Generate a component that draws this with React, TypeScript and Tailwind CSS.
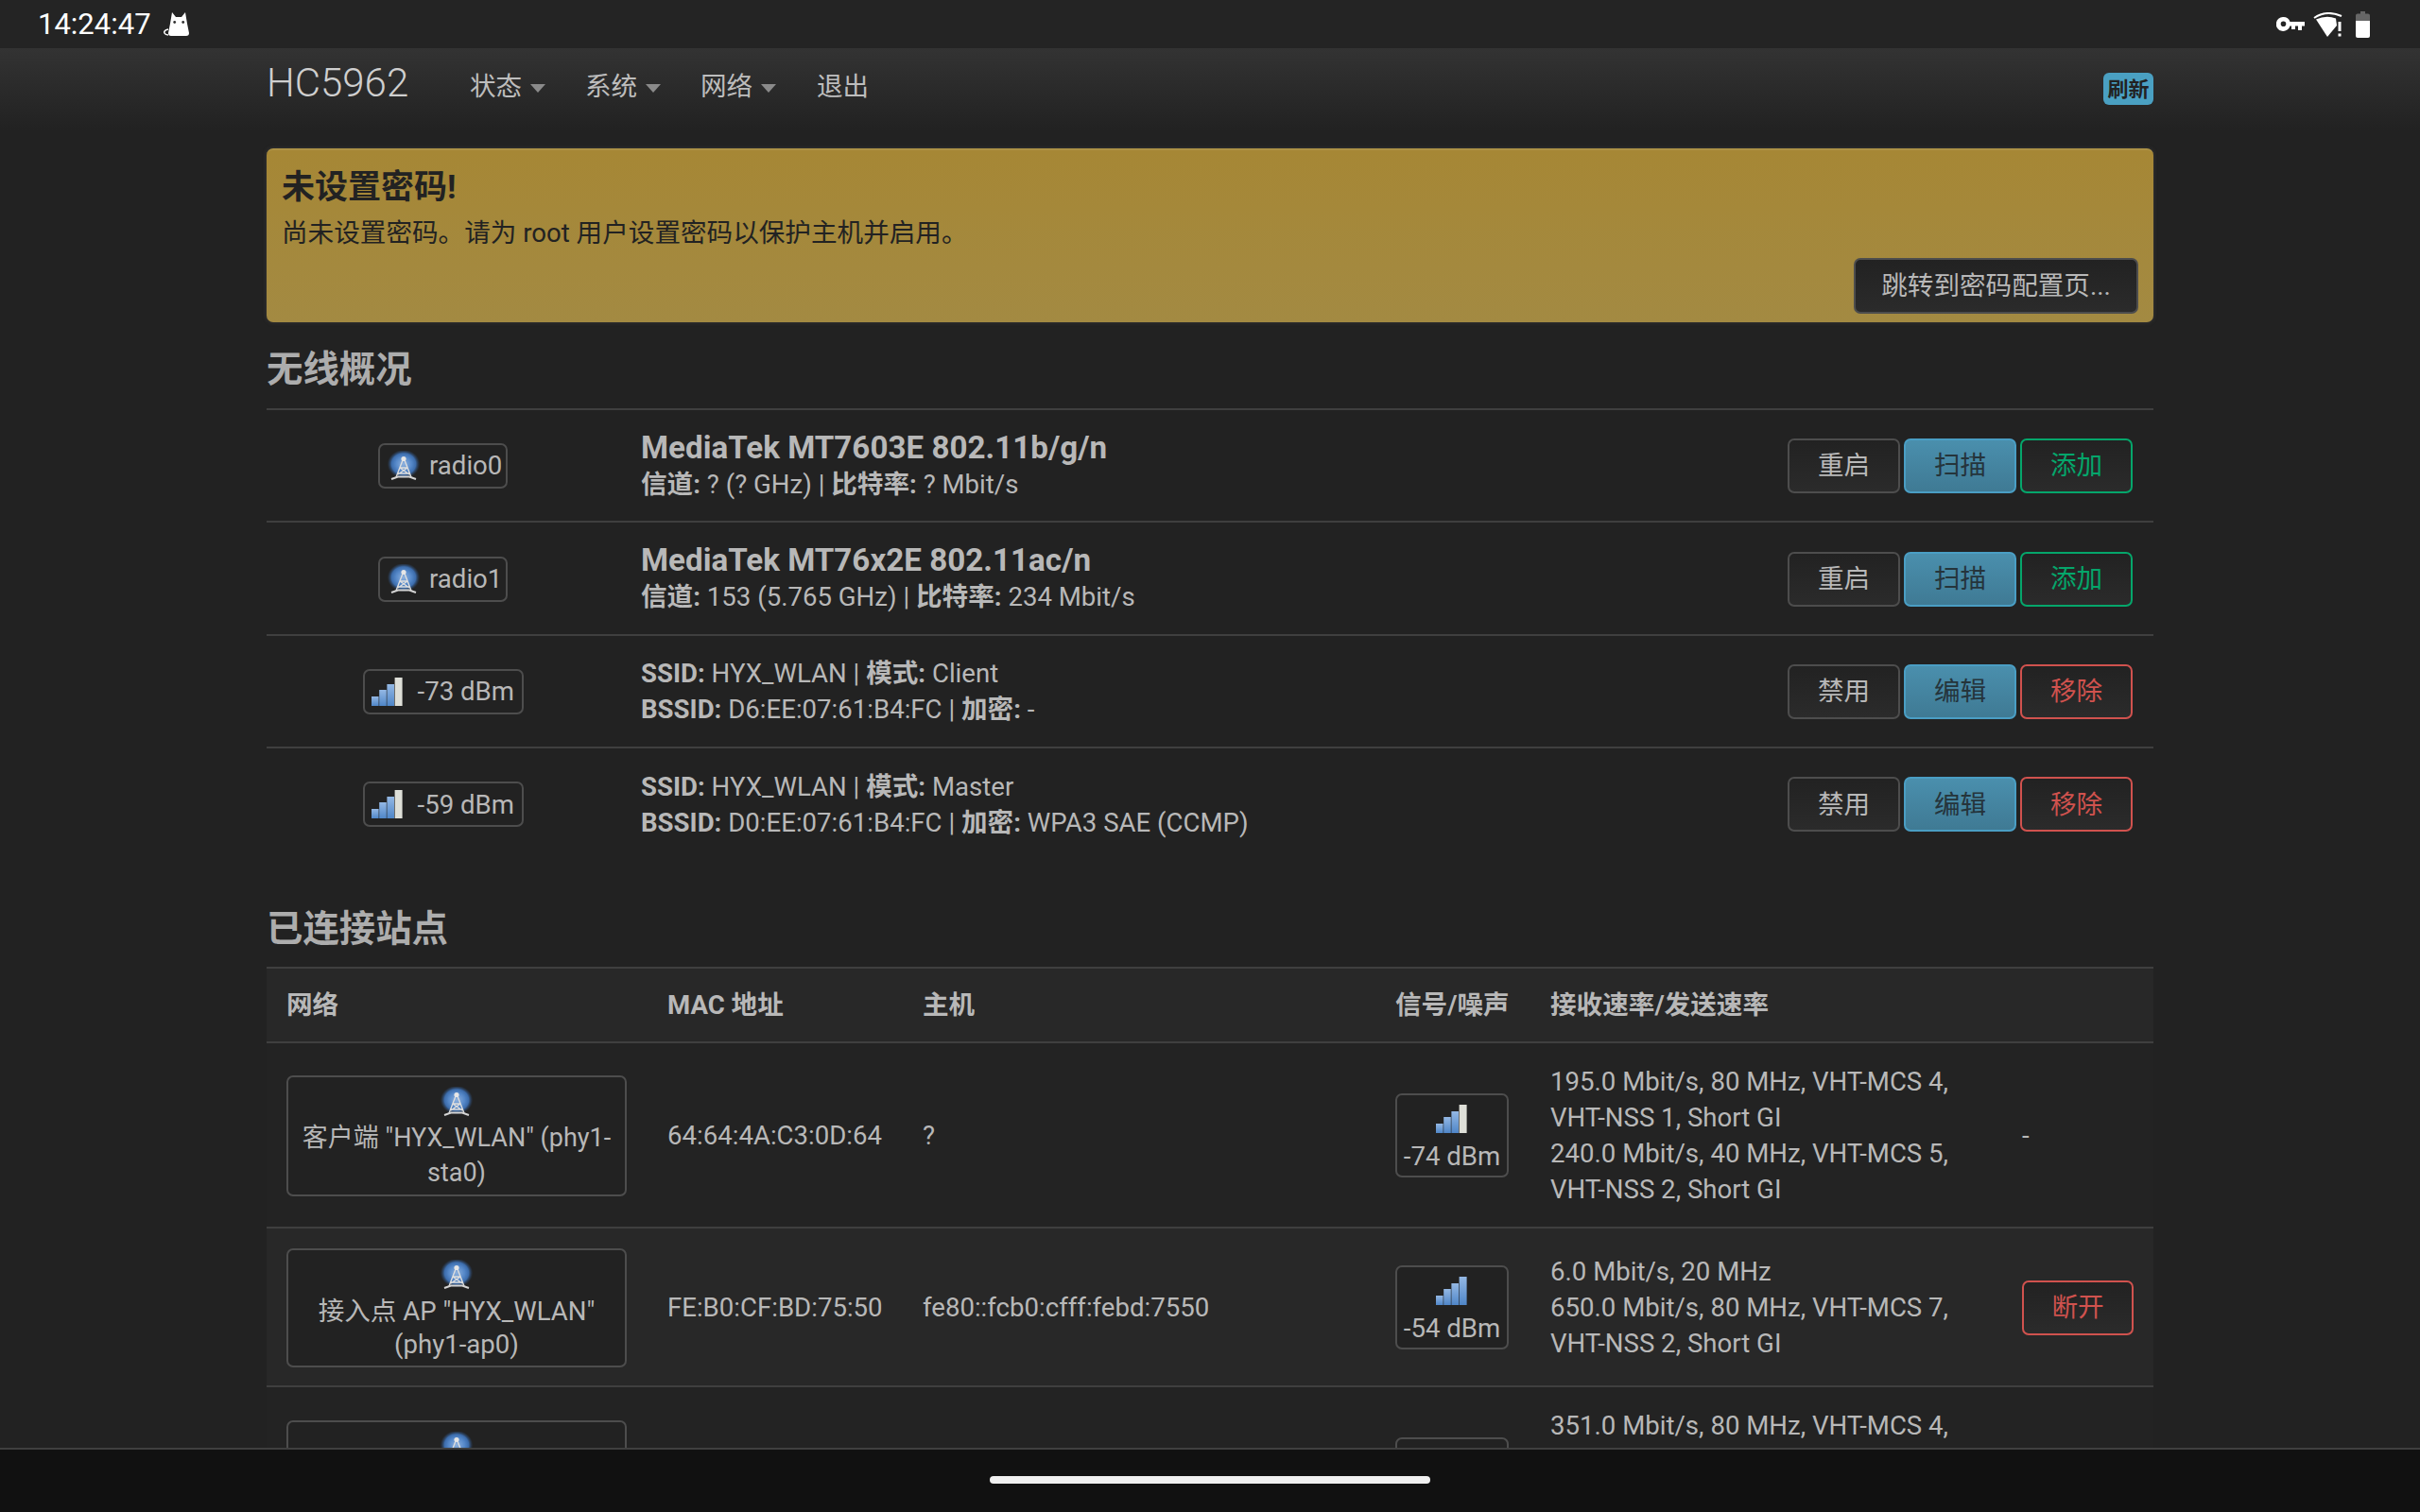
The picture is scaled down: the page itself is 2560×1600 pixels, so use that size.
import React from "react";

const font = { fontFamily: 'Roboto, "Noto Sans CJK SC", sans-serif' };

function Tower({ id }: { id: string }) {
  return (
    <svg width="34" height="32" viewBox="0 0 34 32" className="shrink-0">
      <defs>
        <radialGradient id={id} cx="50%" cy="50%" r="50%">
          <stop offset="0%" stopColor="#8fb2de" />
          <stop offset="50%" stopColor="#5487c8" />
          <stop offset="75%" stopColor="#3c6cab" />
          <stop offset="100%" stopColor="#2a4468" stopOpacity="0.1" />
        </radialGradient>
      </defs>
      <ellipse cx="17" cy="14" rx="17" ry="15" fill={`url(#${id})`} />
      <path d="M16 10 L9 28 M18 10 L25 28 M13 18 L21 18 M11 24 L23 24 M13 18 L23 25 M21 18 L11 25" stroke="#dedede" strokeWidth="1.4" fill="none" />
      <path d="M4 30 L11 27.5 L23 27.5 L30 30" stroke="#d4d4d4" strokeWidth="2" fill="none" />
      <circle cx="17" cy="8.5" r="2.6" fill="#e6e6e6" />
    </svg>
  );
}

function Signal({ full, id }: { full?: boolean; id: string }) {
  return (
    <svg width="34" height="32" viewBox="0 0 34 32" className="shrink-0">
      <defs>
        <linearGradient id={id} x1="0" y1="0" x2="0" y2="1">
          <stop offset="0%" stopColor="#94b8e4" />
          <stop offset="100%" stopColor="#4f86c8" />
        </linearGradient>
      </defs>
      <rect x="0" y="21" width="7.6" height="10" fill={`url(#${id})`} />
      <rect x="8.2" y="14" width="7.6" height="17" fill={`url(#${id})`} />
      <rect x="16.4" y="8" width="7.6" height="23" fill={`url(#${id})`} />
      <rect x="24.6" y="1" width="8" height="30" fill={full ? `url(#${id})` : "#dedfd8"} />
    </svg>
  );
}

function Btn({ kind, children }: { kind: "default" | "info" | "green" | "red"; children: React.ReactNode }) {
  const styles = {
    default: "border-[#4d4d4d] text-[#b8b8b8] bg-gradient-to-b from-[#222222] to-[#2b2b2b]",
    info: "border-[#4a9ec4] text-[#25343b] bg-gradient-to-b from-[#4a8fad] to-[#3f7a94]",
    green: "border-[#05a66b] text-[#05a66b] bg-gradient-to-b from-[#222222] to-[#2b2b2b]",
    red: "border-[#d0524e] text-[#d0524e] bg-gradient-to-b from-[#222222] to-[#2b2b2b]",
  }[kind];
  return (
    <div className={`w-[119px] h-[58px] rounded-[7px] border-2 flex items-center justify-center text-[27.6px] ${styles}`}>
      {children}
    </div>
  );
}

function Row({ badge, lines, buttons }: { badge: React.ReactNode; lines: React.ReactNode; buttons: React.ReactNode }) {
  return (
    <div className="h-[119.4px] border-t-2 border-[#3f3f3f] pt-[1px] flex items-center box-border">
      <div className="w-[373px] flex justify-center shrink-0">{badge}</div>
      <div className="ml-[23px] flex-1 text-[27.6px] leading-[38px] pt-[1px]">{lines}</div>
      <div className="flex gap-[4px] pr-[22px]">{buttons}</div>
    </div>
  );
}

function Badge({ icon, text, wide }: { icon: React.ReactNode; text: string; wide?: boolean }) {
  return (
    <div className={`h-[48px] rounded-[7px] border-2 border-[#4d4d4d] bg-[#222222] flex items-center text-[27.6px] text-[#b8b8b8] ${wide ? "w-[170px] pl-[7px] gap-[15px]" : "w-[137px] pl-[8px] gap-[10px]"}`}>
      {icon}
      <span>{text}</span>
    </div>
  );
}

function Radio({ title, sub }: { title: string; sub: React.ReactNode }) {
  return (
    <div className="-mt-[2px]">
      <div className="text-[33.2px] font-bold leading-[40px] text-[#b8b8b8]">{title}</div>
      <div className="leading-[38px]">{sub}</div>
    </div>
  );
}

function NetBox({ id, l1, l2, tight }: { id: string; l1: string; l2: string; tight?: boolean }) {
  return (
    <div className={`w-[360px] rounded-[7px] border-2 border-[#4d4d4d] bg-[#222222] flex flex-col items-center text-center leading-[37px] text-[#b8b8b8] pt-[10px] pb-[4px] ${tight ? "text-[27.6px]" : "text-[27px]"}`}>
      <Tower id={id} />
      <div className="px-[6px] mt-[4px] whitespace-nowrap">{l1}</div>
      <div className={tight ? "-mt-[2px]" : ""}>{l2}</div>
    </div>
  );
}

function SigBox({ id, full, text }: { id: string; full?: boolean; text: string }) {
  return (
    <div className="w-[120px] h-[89px] rounded-[7px] border-2 border-[#4d4d4d] bg-[#222222] flex flex-col items-center pt-[9px] text-[27.6px] leading-[36px] text-[#b8b8b8]">
      <Signal id={id} full={full} />
      <span className="mt-[6px]">{text}</span>
    </div>
  );
}

const cell = "px-[21px] pt-[22px] pb-[20px] align-middle";
const cellTight = "px-[21px] pt-[21px] pb-[19px] align-middle";

export default function App() {
  return (
    <div style={font} className="w-[2560px] h-[1600px] overflow-hidden bg-[#222222] flex flex-col text-[#b8b8b8]">
      {/* Status bar */}
      <div className="h-[51px] shrink-0 bg-[#242424] flex items-center pl-[40px] pr-[53px] text-white">
        <span className="text-[31px] leading-none">14:24:47</span>
        <svg width="28" height="26" viewBox="0 0 28 26" className="ml-[13px]">
          <path d="M9 0 L13 5 H19 L23 0 L25 12 L27 22 Q27 25 24 25 H8 Q5 25 5 22 L7 12 Z" fill="#fff" />
          <path d="M5 18 Q0 19 1 22 Q2 24 5 24" stroke="#fff" strokeWidth="1.6" fill="none" />
          <circle cx="11.7" cy="10.5" r="1.4" fill="#333" />
          <circle cx="20.7" cy="10.5" r="1.4" fill="#333" />
        </svg>
        <div className="flex-1" />
        <svg width="30" height="15" viewBox="0 0 30 15">
          <path fillRule="evenodd" d="M7.5 0 A7.5 7.5 0 0 1 14.5 5 H30 V9.5 H27 V14 H23 V9.5 H20 V13 H16 V9.5 H14.5 A7.5 7.5 0 1 1 7.5 0 Z M7.5 4.5 A2.8 2.8 0 1 0 7.5 10.1 A2.8 2.8 0 1 0 7.5 4.5 Z" fill="#fff" />
        </svg>
        <svg width="31" height="26" viewBox="0 0 31 26" className="ml-[9px]">
          <path d="M1 6 Q14 -3 30 4" stroke="#fff" strokeWidth="2" fill="none" />
          <path d="M3 7.5 Q14 2.5 24 6.5 L25 14 L15 26 Z" fill="#fff" />
          <rect x="26.5" y="10" width="3" height="10" fill="#fff" />
          <rect x="26.5" y="22.5" width="3" height="3" fill="#fff" />
        </svg>
        <svg width="15" height="28" viewBox="0 0 15 28" className="ml-[14px]">
          <path d="M5 0 H10 V2.5 H13 Q15 2.5 15 4.5 V10 H0 V4.5 Q0 2.5 2 2.5 H5 Z" fill="#666" />
          <path d="M0 10 H15 V26 Q15 28 13 28 H2 Q0 28 0 26 Z" fill="#fff" />
        </svg>
      </div>

      {/* Page */}
      <div className="flex-1 min-h-0 overflow-hidden">
        {/* Navbar */}
        <div className="h-[86px] bg-gradient-to-b from-[#333333] to-[#222222]">
          <div className="w-[1996px] mx-auto h-full flex items-start">
            <span className="text-[42px] font-light text-[#cfcfcf] leading-[48px] mt-[13px] w-[215px]">HC5962</span>
            <div className="flex items-center text-[27.6px] text-[#bdbdbd] mt-[22px] leading-[38px]">
              <span className="w-[122px] flex items-center">状态<span className="ml-[9px] mt-[3px] w-0 h-0 border-x-[8px] border-x-transparent border-t-[9px] border-t-[#8a8a8a]" /></span>
              <span className="w-[122px] flex items-center">系统<span className="ml-[9px] mt-[3px] w-0 h-0 border-x-[8px] border-x-transparent border-t-[9px] border-t-[#8a8a8a]" /></span>
              <span className="w-[123px] flex items-center">网络<span className="ml-[9px] mt-[3px] w-0 h-0 border-x-[8px] border-x-transparent border-t-[9px] border-t-[#8a8a8a]" /></span>
              <span>退出</span>
            </div>
            <div className="flex-1" />
            <span className="mt-[26px] w-[53px] h-[34px] rounded-[6px] bg-[#4aa0c2] text-[#222222] text-[22px] font-bold flex items-center justify-center">刷新</span>
          </div>
        </div>

        <div className="w-[1996px] mx-auto">
          {/* Alert */}
          <div className="mt-[20px] h-[184px] rounded-[7px] border-t-2 border-[#ad9246] bg-gradient-to-b from-[#a68735] to-[#a38a42] px-[16px] flex flex-col text-[#222222] shadow-[0_0_4px_#3a3a3a]">
            <div className="text-[35px] font-bold leading-[44px] mt-[18px]">未设置密码!</div>
            <div className="text-[27.6px] leading-[38px] mt-[7px]">尚未设置密码。请为 root 用户设置密码以保护主机并启用。</div>
            <div className="flex justify-end mt-auto mb-[9px]">
              <div className="w-[301px] h-[59px] rounded-[7px] border-2 border-[#4d4d4d] bg-gradient-to-b from-[#222222] to-[#2b2b2b] text-[#b8b8b8] text-[27.6px] flex items-center justify-center">跳转到密码配置页...</div>
            </div>
          </div>

          <div className="mt-[22px] mb-[13px] text-[38.4px] font-bold leading-[56px] text-[#adadad]">无线概况</div>

          <Row
            badge={<Badge icon={<Tower id="t1" />} text="radio0" />}
            lines={<Radio title="MediaTek MT7603E 802.11b/g/n" sub={<><b>信道:</b> ? (? GHz) | <b>比特率:</b> ? Mbit/s</>} />}
            buttons={<><Btn kind="default">重启</Btn><Btn kind="info">扫描</Btn><Btn kind="green">添加</Btn></>}
          />
          <Row
            badge={<Badge icon={<Tower id="t2" />} text="radio1" />}
            lines={<Radio title="MediaTek MT76x2E 802.11ac/n" sub={<><b>信道:</b> 153 (5.765 GHz) | <b>比特率:</b> 234 Mbit/s</>} />}
            buttons={<><Btn kind="default">重启</Btn><Btn kind="info">扫描</Btn><Btn kind="green">添加</Btn></>}
          />
          <Row
            badge={<Badge wide icon={<Signal id="s1" />} text="-73 dBm" />}
            lines={<><div><b>SSID:</b> HYX_WLAN | <b>模式:</b> Client</div><div><b>BSSID:</b> D6:EE:07:61:B4:FC | <b>加密:</b> -</div></>}
            buttons={<><Btn kind="default">禁用</Btn><Btn kind="info">编辑</Btn><Btn kind="red">移除</Btn></>}
          />
          <Row
            badge={<Badge wide icon={<Signal id="s2" />} text="-59 dBm" />}
            lines={<><div><b>SSID:</b> HYX_WLAN | <b>模式:</b> Master</div><div><b>BSSID:</b> D0:EE:07:61:B4:FC | <b>加密:</b> WPA3 SAE (CCMP)</div></>}
            buttons={<><Btn kind="default">禁用</Btn><Btn kind="info">编辑</Btn><Btn kind="red">移除</Btn></>}
          />

          <div className="mt-[45px] mb-[12px] text-[38.4px] font-bold leading-[56px] text-[#adadad]">已连接站点</div>

          <table className="w-[1996px] table-fixed border-collapse text-[27.6px] leading-[38px] text-[#b8b8b8]">
            <colgroup>
              <col className="w-[403px]" />
              <col className="w-[270px]" />
              <col className="w-[500px]" />
              <col className="w-[164px]" />
              <col className="w-[499px]" />
              <col className="w-[160px]" />
            </colgroup>
            <thead>
              <tr className="bg-[#282828] border-t-2 border-[#3f3f3f] h-[79px] text-left">
                <th className="px-[21px] pt-[1px] font-bold">网络</th>
                <th className="px-[21px] pt-[1px] font-bold">MAC 地址</th>
                <th className="px-[21px] pt-[1px] font-bold">主机</th>
                <th className="px-[21px] pt-[1px] font-bold whitespace-nowrap">信号/噪声</th>
                <th className="px-[21px] pt-[1px] font-bold whitespace-nowrap">接收速率/发送速率</th>
                <th />
              </tr>
            </thead>
            <tbody>
              <tr className="bg-[#232323] border-t-2 border-[#3f3f3f]">
                <td className={cell}><NetBox id="n1" l1={'客户端 "HYX_WLAN" (phy1-'} l2="sta0)" /></td>
                <td className={cell}>64:64:4A:C3:0D:64</td>
                <td className={cell}>?</td>
                <td className={cell}><SigBox id="q1" text="-74 dBm" /></td>
                <td className={cell}>195.0 Mbit/s, 80 MHz, VHT-MCS 4, VHT-NSS 1, Short GI<br />240.0 Mbit/s, 40 MHz, VHT-MCS 5, VHT-NSS 2, Short GI</td>
                <td className={cell}>-</td>
              </tr>
              <tr className="bg-[#282828] border-t-2 border-[#3f3f3f]">
                <td className={cellTight}><NetBox id="n2" tight l1={'接入点 AP "HYX_WLAN"'} l2="(phy1-ap0)" /></td>
                <td className={cellTight}>FE:B0:CF:BD:75:50</td>
                <td className={cellTight}>fe80::fcb0:cfff:febd:7550</td>
                <td className={cellTight}><SigBox id="q2" full text="-54 dBm" /></td>
                <td className={cellTight}>6.0 Mbit/s, 20 MHz<br />650.0 Mbit/s, 80 MHz, VHT-MCS 7, VHT-NSS 2, Short GI</td>
                <td className={cellTight}>
                  <div className="w-[118px] h-[58px] rounded-[7px] border-2 border-[#d0524e] text-[#d0524e] bg-gradient-to-b from-[#222222] to-[#2b2b2b] flex items-center justify-center">断开</div>
                </td>
              </tr>
              <tr className="bg-[#232323] border-t-2 border-[#3f3f3f]">
                <td className={cell}><NetBox id="n3" tight l1={'接入点 AP "HYX_WLAN"'} l2="(phy1-ap0)" /></td>
                <td className={cell}>FE:B0:CF:BD:75:51</td>
                <td className={cell}>?</td>
                <td className={cell}><SigBox id="q3" full text="-60 dBm" /></td>
                <td className={cell}>351.0 Mbit/s, 80 MHz, VHT-MCS 4, VHT-NSS 2, Short GI<br />650.0 Mbit/s, 80 MHz, VHT-MCS 7, VHT-NSS 2, Short GI</td>
                <td className={cell} />
              </tr>
            </tbody>
          </table>
        </div>
      </div>

      {/* Gesture bar */}
      <div className="h-[68px] shrink-0 bg-[#111111] border-t-2 border-[#3f3f3f] flex justify-center pt-[28px]">
        <div className="w-[466px] h-[8px] rounded-full bg-[#f0f0f0]" />
      </div>
    </div>
  );
}
